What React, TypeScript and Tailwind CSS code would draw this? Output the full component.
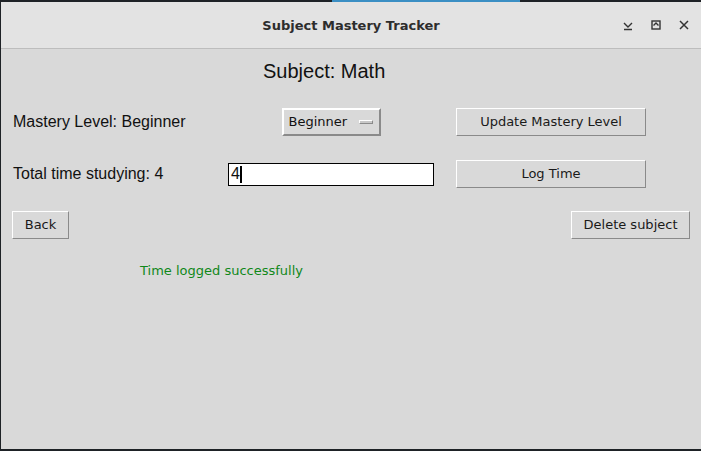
import { useState } from "react";

const LEVELS = ["Beginner", "Intermediate", "Advanced"];

const TkButton = ({ label, className = "" }: { label: string; className?: string }) => (
  <button
    className={`h-[28px] bg-[#d9d9d9] border border-t-white border-l-white border-b-[#8a8a8a] border-r-[#8a8a8a] text-[13px] text-[#1a1a1a] font-['DejaVu_Sans',sans-serif] ${className}`}
  >
    {label}
  </button>
);

const App = () => {
  const [level] = useState(LEVELS[0]);
  const [hours] = useState("4");

  return (
    <div className="w-[701px] h-[451px] bg-[#1e2226] pt-[2px] pl-[1px] pb-[2px] flex flex-col">
      {/* top strip highlight */}
      <div className="h-0 relative">
        <div className="absolute left-[331px] -top-[2px] w-[188px] h-[2px] bg-[#3b8fc4]" />
      </div>

      {/* title bar */}
      <div className="h-[47px] bg-[#e3e3e3] border-b border-[#bdbdbd] flex items-center relative shrink-0">
        <div className="flex-1 pt-[1px] text-center text-[13px] font-bold text-[#2d2d2d] font-['DejaVu_Sans',sans-serif]">
          Subject Mastery Tracker
        </div>
        <div className="absolute right-[10px] top-0 h-full flex items-center gap-[14px] text-[#333]">
          <svg width="14" height="14" viewBox="0 0 14 14" fill="none" stroke="currentColor" strokeWidth="1.4">
            <path d="M3 5l4 4 4-4M3 11.5h8" />
          </svg>
          <svg width="14" height="14" viewBox="0 0 14 14" fill="none" stroke="currentColor" strokeWidth="1.4">
            <rect x="3" y="3" width="8" height="8" />
            <path d="M4.5 7.5L7 5l2.5 2.5" />
          </svg>
          <svg width="14" height="14" viewBox="0 0 14 14" fill="none" stroke="currentColor" strokeWidth="1.5">
            <path d="M3 3l8 8M11 3l-8 8" />
          </svg>
        </div>
      </div>

      {/* body */}
      <div className="flex-1 bg-[#d9d9d9] font-['Liberation_Sans',Arial,sans-serif] text-[#111]">
        <div className="pt-[10px] pl-[262px] text-[20px] leading-[24px]">Subject: Math</div>

        <div className="mt-[25px] grid grid-cols-[227px_228px_190px] gap-y-[24px] items-center">
          <div className="pl-[12px] text-[16px]">Mastery Level: {level}</div>
          <div className="w-[206px] flex justify-center">
            <div className="w-[99px] h-[28px] border-2 border-t-white border-l-white border-b-[#8a8a8a] border-r-[#8a8a8a] flex items-center pl-[5px] pr-[6px] justify-between text-[13px] font-['DejaVu_Sans',sans-serif]">
              <span>{level}</span>
              <span className="w-[14px] h-[4px] bg-[#c8c8c8] border border-t-white border-l-white border-b-[#8a8a8a] border-r-[#8a8a8a]" />
            </div>
          </div>
          <TkButton label="Update Mastery Level" className="w-[190px]" />

          <div className="pl-[12px] text-[16px]">Total time studying: {hours}</div>
          <div className="w-[206px] h-[23px] bg-white border border-black px-[2px] flex items-center text-[16px]">
            <span>{hours}</span>
            <span className="w-[2px] h-[17px] bg-black" />
          </div>
          <TkButton label="Log Time" className="w-[190px]" />
        </div>

        <div className="mt-[23px] px-[11px] flex justify-between">
          <TkButton label="Back" className="w-[57px]" />
          <TkButton label="Delete subject" className="w-[119px]" />
        </div>

        <div className="mt-[22px] pl-[139px] text-[13px] text-[#10881a] font-['DejaVu_Sans',sans-serif]">
          Time logged successfully
        </div>
      </div>
    </div>
  );
};

export default App;
